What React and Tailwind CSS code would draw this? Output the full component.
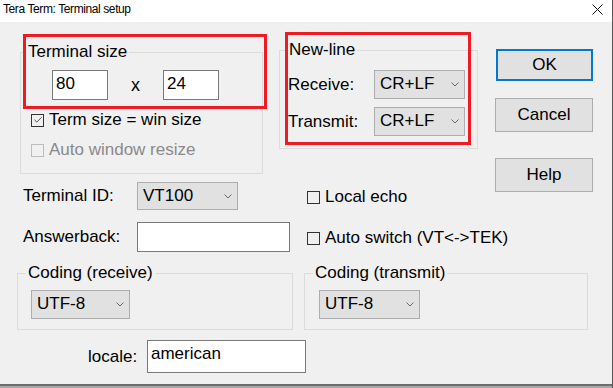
import { Check } from "lucide-react"

// small windows-style combo box
function Combo({ value, className = "" }) {
  return (
    <div className={`flex shrink-0 items-center justify-between border border-[#adadad] bg-[#e1e1e1] pl-[5px] pr-[5px] ${className}`}>
      <span className="pb-[1px]">{value}</span>
      <svg width="8" height="5" viewBox="0 0 8 5">
        <path d="M0.5 0.5 L4 4 L7.5 0.5" stroke="#6a6a6a" strokeWidth="1" fill="none" />
      </svg>
    </div>
  )
}

function CheckBox({ checked = false, disabled = false }) {
  return (
    <span
      className={`flex h-[13px] w-[13px] shrink-0 items-center justify-center border ${
        disabled ? "border-[#bcbcbc] bg-[#f0f0f0]" : "border-[#333333] bg-[#f0f0f0]"
      }`}
    >
      {checked && <Check className="h-[10px] w-[10px] text-[#111]" strokeWidth={1.75} />}
    </span>
  )
}

export default function App() {
  return (
    <div className="relative flex h-[388px] w-[613px] flex-col overflow-hidden border-r border-[#555555] bg-[#a9a9a9] font-['Liberation_Sans',Arial,sans-serif] text-[17px] text-black">
      {/* title bar */}
      <div className="flex h-[22px] shrink-0 items-start justify-between bg-white">
        <span className="pl-[3px] pt-[1px] text-[12px] leading-[16px] tracking-[-0.4px] text-black">Tera Term: Terminal setup</span>
        <svg className="mr-[9px] mt-[4px]" width="11" height="11" viewBox="0 0 11 11">
          <path d="M0.5 0.5 L10.5 10.5 M10.5 0.5 L0.5 10.5" stroke="#111" strokeWidth="1" />
        </svg>
      </div>

      <div className="flex h-[364px] shrink-0 flex-col border-b-2 border-[#6d6d6d] bg-[#f0f0f0]">
        <div className="flex items-start">
          {/* left column */}
          <div className="ml-[20px] flex w-[259px] shrink-0 flex-col">
            <div className="mt-[30px] h-[122px] w-[243px] border border-[#dcdcdc]">
              <div className="-mt-[10px] ml-[5px] w-fit bg-[#f0f0f0] px-[2px] leading-[18px]">Terminal size</div>
              <div className="mt-[9px] flex h-[30px] items-center pl-[31px]">
                <div className="flex h-[30px] w-[56px] items-center border border-[#7a7a7a] bg-white pb-[2px] pl-[3px]">80</div>
                <span className="w-[55px] text-center text-[18px] leading-none">x</span>
                <div className="flex h-[30px] w-[56px] items-center border border-[#7a7a7a] bg-white pb-[2px] pl-[3px]">24</div>
              </div>
              <div className="ml-[10px] mt-[10px] flex h-[20px] items-center gap-[5px]">
                <CheckBox checked />
                <span className="whitespace-nowrap">Term size = win size</span>
              </div>
              <div className="ml-[10px] mt-[10px] flex h-[20px] items-center gap-[5px]">
                <CheckBox disabled />
                <span className="whitespace-nowrap text-[#8a8a8a]">Auto window resize</span>
              </div>
            </div>
            <div className="mt-[8px] flex h-[28px] items-center">
              <span className="w-[117px] shrink-0 pl-[3px]">Terminal ID:</span>
              <Combo value="VT100" className="h-[28px] w-[101px]" />
            </div>
            <div className="mt-[12px] flex h-[30px] items-center">
              <span className="w-[117px] shrink-0 pl-[3px]">Answerback:</span>
              <div className="h-[30px] w-[153px] shrink-0 border border-[#7a7a7a] bg-white" />
            </div>
          </div>

          {/* middle column */}
          <div className="flex w-[216px] shrink-0 flex-col">
            <div className="mt-[28px] h-[99px] w-[199px] border border-[#dcdcdc]">
              <div className="-mt-[10px] ml-[7px] w-fit bg-[#f0f0f0] px-[2px] leading-[18px]">New-line</div>
              <div className="mt-[11px] flex h-[29px] items-center">
                <span className="w-[94px] shrink-0 pl-[8px]">Receive:</span>
                <Combo value="CR+LF" className="h-[29px] w-[91px]" />
              </div>
              <div className="mt-[8px] flex h-[29px] items-center">
                <span className="w-[94px] shrink-0 pl-[8px]">Transmit:</span>
                <Combo value="CR+LF" className="h-[29px] w-[91px]" />
              </div>
            </div>
            <div className="ml-[28px] mt-[38px] flex h-[20px] items-center gap-[5px]">
              <CheckBox />
              <span className="whitespace-nowrap">Local echo</span>
            </div>
            <div className="ml-[28px] mt-[21px] flex h-[20px] items-center gap-[5px]">
              <CheckBox />
              <span className="whitespace-nowrap">Auto switch (VT&lt;-&gt;TEK)</span>
            </div>
          </div>

          {/* buttons */}
          <div className="flex w-[98px] shrink-0 flex-col">
            <button className="mt-[27px] h-[32px] w-[97px] self-end border-2 border-[#0078d7] bg-[#e1e1e1]">OK</button>
            <button className="mt-[17px] h-[34px] w-[98px] border border-[#adadad] bg-[#e1e1e1]">Cancel</button>
            <button className="mt-[26px] h-[34px] w-[98px] border border-[#adadad] bg-[#e1e1e1]">Help</button>
          </div>
        </div>

        {/* coding groups */}
        <div className="mt-[21px] flex">
          <div className="ml-[17px] h-[57px] w-[276px] border border-[#dcdcdc]">
            <div className="-mt-[10px] ml-[8px] w-fit bg-[#f0f0f0] px-[2px] leading-[18px]">Coding (receive)</div>
            <Combo value="UTF-8" className="ml-[13px] mt-[8px] h-[29px] w-[99px]" />
          </div>
          <div className="ml-[11px] h-[57px] w-[284px] border border-[#dcdcdc]">
            <div className="-mt-[10px] ml-[8px] w-fit bg-[#f0f0f0] px-[2px] leading-[18px]">Coding (transmit)</div>
            <Combo value="UTF-8" className="ml-[14px] mt-[8px] h-[29px] w-[101px]" />
          </div>
        </div>

        <div className="ml-[88px] mt-[10px] flex h-[33px] items-center">
          <span className="w-[59px] shrink-0">locale:</span>
          <div className="flex h-[33px] w-[159px] items-center border border-[#7a7a7a] bg-white pb-[5px] pl-[3px]">american</div>
        </div>
      </div>

      {/* red annotation boxes */}
      <div className="pointer-events-none absolute left-[23px] top-[34px] h-[75px] w-[244px] border-[3px] border-[#ed1c24]" />
      <div className="pointer-events-none absolute left-[285px] top-[32px] h-[113px] w-[186px] border-[3px] border-[#ed1c24]" />
    </div>
  )
}
